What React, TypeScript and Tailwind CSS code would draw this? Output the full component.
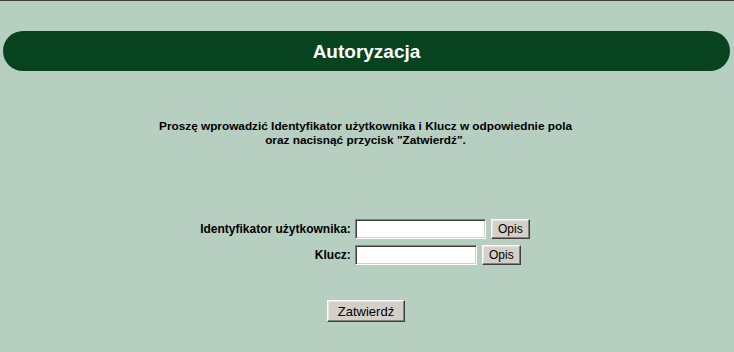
import React from "react";

const font = { fontFamily: '"Liberation Sans", Arial, sans-serif' };

function Btn({ children, className = "" }: { children: React.ReactNode; className?: string }) {
  return (
    <button
      className={
        "bg-[#d4d0c8] text-black text-[12px] leading-none border border-t-white border-l-white border-b-[#404040] border-r-[#404040] shadow-[inset_-1px_-1px_0_#808080,inset_1px_1px_0_#e8e6e1] " +
        className
      }
      style={font}
    >
      {children}
    </button>
  );
}

function Field({ w }: { w: string }) {
  return (
    <input
      type="text"
      className={
        "bg-white border border-t-[#808080] border-l-[#808080] border-b-white border-r-white shadow-[inset_1px_1px_0_#404040,inset_-1px_-1px_0_#d4d0c8] outline-none " +
        w
      }
    />
  );
}

export default function App() {
  return (
    <div className="w-[734px] h-[352px] bg-[#b6cfc1] border-t border-t-[#3c3c3c] overflow-hidden" style={font}>
      <div className="mt-[30px] mx-[3px] mr-[4px] h-[40px] rounded-full bg-[#08431f] flex items-center justify-center">
        <span className="text-white font-bold text-[19px] leading-none">Autoryzacja</span>
      </div>
      <div className="mt-[48px] flex flex-col items-center text-[11.8px] leading-[14px] font-bold text-black pr-[3px]">
        <div>Proszę wprowadzić Identyfikator użytkownika i Klucz w odpowiednie pola</div>
        <div>oraz nacisnąć przycisk "Zatwierdź".</div>
      </div>
      <div className="mt-[72px] flex justify-center pr-[4px]">
        <div className="grid grid-cols-[auto_auto] gap-x-[4px] gap-y-[6px] items-center">
          <div className="text-right text-[12px] font-bold">Identyfikator użytkownika:</div>
          <div className="flex items-center gap-[5px]">
            <Field w="w-[131px] h-[20px]" />
            <Btn className="w-[39px] h-[20px]">Opis</Btn>
          </div>
          <div className="text-right text-[12px] font-bold">Klucz:</div>
          <div className="flex items-center gap-[5px]">
            <Field w="w-[122px] h-[20px]" />
            <Btn className="w-[39px] h-[20px]">Opis</Btn>
          </div>
        </div>
      </div>
      <div className="mt-[35px] flex justify-center pr-[2px]">
        <Btn className="w-[78px] h-[22px] text-[13px]">Zatwierdź</Btn>
      </div>
    </div>
  );
}
